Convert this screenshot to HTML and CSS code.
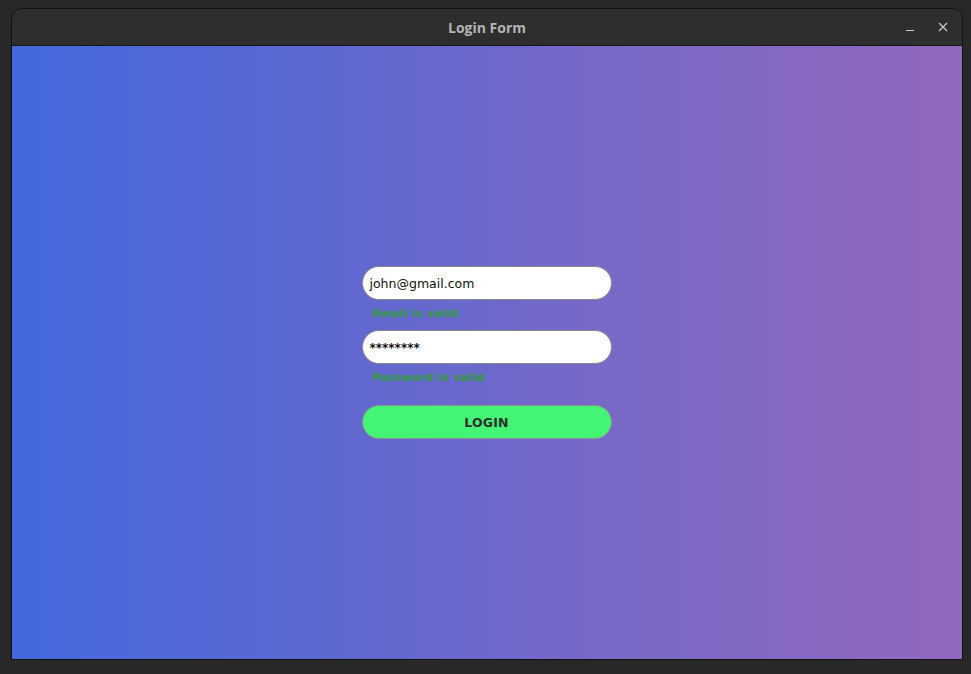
FILE: index.html
```html
<!DOCTYPE html>
<html>
<head>
<meta charset="utf-8">
<title>Login Form</title>
<link rel="stylesheet" href="styles.css">
</head>
<body>
<div class="window">
  <div class="titlebar">
    <span class="title">Login Form</span>
    <div class="controls">
      <svg class="ctl" width="10" height="10" viewBox="0 0 10 10"><path d="M1 8.5H9" stroke="#c8c8c8" stroke-width="1.2"/></svg>
      <svg class="ctl" width="10" height="10" viewBox="0 0 10 10"><path d="M1 1L9 9M9 1L1 9" stroke="#c8c8c8" stroke-width="1.3"/></svg>
    </div>
  </div>
  <div class="content">
    <form class="form">
      <div class="field">john@gmail.com</div>
      <div class="status">Email is valid</div>
      <div class="field pw">********</div>
      <div class="status">Password is valid</div>
      <button type="button" class="login">LOGIN</button>
    </form>
  </div>
</div>
</body>
</html>
```
FILE: styles.css
```css
html, body {
  margin: 0;
  padding: 0;
  background: #282828;
  width: 971px;
  height: 674px;
  overflow: hidden;
}
body {
  padding: 8px 0 0 11px;
  box-sizing: border-box;
}
.window {
  width: 952px;
  height: 652px;
  border: 1px solid #121212;
  border-radius: 11px 11px 0 0;
  box-sizing: border-box;
  display: flex;
  flex-direction: column;
  overflow: hidden;
  background: #2e2e2e;
}
.titlebar {
  height: 36px;
  flex: none;
  display: flex;
  align-items: center;
  justify-content: center;
  position: relative;
  border-bottom: 1px solid #151515;
  background: #2e2e2e;
}
.title {
  font-family: "Open Sans", "DejaVu Sans", sans-serif;
  font-weight: 700;
  font-size: 14px;
  color: #b4b4b4;
  margin-top: 1px;
}
.controls {
  position: absolute;
  right: 14px;
  top: 13px;
  display: flex;
  gap: 23px;
}
.content {
  flex: 1;
  background: linear-gradient(to right, #4369dc, #5d68d2 32%, #7a69c6 65%, #9268bf);
  display: flex;
  align-items: center;
  justify-content: center;
}
.form {
  width: 250px;
  display: flex;
  flex-direction: column;
  margin: 0 1px 0 0;
}
.field {
  height: 34px;
  box-sizing: border-box;
  background: #fff;
  border: 1px solid #8a8a8a;
  border-radius: 17px;
  padding: 0 7px;
  display: flex;
  align-items: center;
  font-family: "DejaVu Sans", sans-serif;
  font-size: 12.5px;
  color: #111;
}
.field.pw {
  font-size: 12px;
  font-weight: 700;
  padding-top: 1px;
}
.status {
  height: 30px;
  display: flex;
  align-items: center;
  padding-left: 11px;
  padding-bottom: 3px;
  box-sizing: border-box;
  font-family: "DejaVu Sans", sans-serif;
  font-weight: 700;
  font-size: 11px;
  letter-spacing: 0.3px;
  color: #2f9c36;
}
.login {
  margin-top: 11px;
  height: 34px;
  border: 1px solid #8f8f8f;
  border-radius: 17px;
  background: #44f575;
  font-family: "DejaVu Sans", sans-serif;
  font-weight: 700;
  font-size: 12.5px;
  letter-spacing: 0.2px;
  color: #2e2e2e;
  padding: 0;
}
```
